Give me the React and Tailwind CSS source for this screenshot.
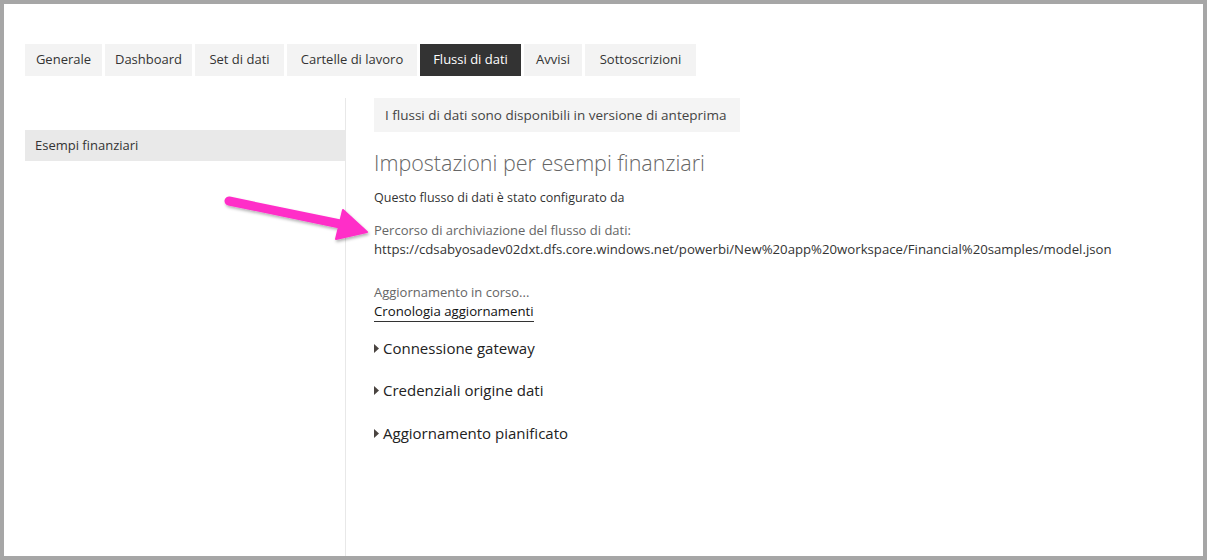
import React from "react";

const tabs = [
  { label: "Generale", w: "w-[77px]" },
  { label: "Dashboard", w: "w-[87px]" },
  { label: "Set di dati", w: "w-[89px]" },
  { label: "Cartelle di lavoro", w: "w-[130px]" },
  { label: "Flussi di dati", w: "w-[101px]", active: true },
  { label: "Avvisi", w: "w-[58px]" },
  { label: "Sottoscrizioni", w: "w-[111px]" },
];

function Tri() {
  return (
    <svg width="5" height="9" viewBox="0 0 5 9" className="mr-[4px] shrink-0">
      <path d="M0 0 L5 4.5 L0 9 Z" fill="#4a4440" />
    </svg>
  );
}

export default function App() {
  return (
    <div
      className="relative w-[1207px] h-[560px] bg-[#a6a6a6] pt-[4px] px-[4px] pb-[4px]"
      style={{ fontFamily: '"Open Sans", "Noto Sans", sans-serif' }}
    >
      <div className="w-full h-full bg-white flex flex-col">
        <div className="flex gap-[3px] pl-[21px] mt-[40px]">
          {tabs.map((t) => (
            <div
              key={t.label}
              className={`${t.w} h-[32px] flex items-center justify-center text-[13px] ${
                t.active ? "bg-[#333333] text-white" : "bg-[#f3f3f3] text-[#333]"
              }`}
            >
              {t.label}
            </div>
          ))}
        </div>
        <div className="flex flex-1 mt-[22px]">
          <div className="w-[321px] ml-[21px] pt-[32px] border-r border-[#e8e8e8]">
            <div className="h-[31px] bg-[#e9e9e9] flex items-center pl-[10px] text-[13px] text-[#333]">
              Esempi finanziari
            </div>
          </div>
          <div className="pl-[28px] flex flex-col">
            <div className="self-start w-[366px] h-[34px] bg-[#f4f4f4] flex items-center pl-[11px] text-[13.5px] text-[#444]">
              I flussi di dati sono disponibili in versione di anteprima
            </div>
            <div className="mt-[16px] text-[21.5px] leading-[30px] font-light text-[#666]">
              Impostazioni per esempi finanziari
            </div>
            <div className="mt-[11px] text-[12.5px] leading-[18px] text-[#333]">
              Questo flusso di dati è stato configurato da
            </div>
            <div className="mt-[14px] text-[13px] leading-[19px] text-[#666]">
              Percorso di archiviazione del flusso di dati:
            </div>
            <div className="text-[13.2px] leading-[19px] text-[#333]">
              https://cdsabyosadev02dxt.dfs.core.windows.net/powerbi/New%20app%20workspace/Financial%20samples/model.json
            </div>
            <div className="mt-[24px] text-[13px] leading-[19px] text-[#666]">
              Aggiornamento in corso...
            </div>
            <div className="self-start text-[13.2px] leading-[19px] text-[#111] border-b border-[#333]">
              Cronologia aggiornamenti
            </div>
            <div className="mt-[6px] flex items-center text-[15px] leading-[40px] text-[#222]">
              <Tri />Connessione gateway
            </div>
            <div className="mt-[2px] flex items-center text-[15px] leading-[40px] text-[#222]">
              <Tri />Credenziali origine dati
            </div>
            <div className="mt-[3px] flex items-center text-[15px] leading-[40px] text-[#222]">
              <Tri />Aggiornamento pianificato
            </div>
          </div>
        </div>
      </div>
      <svg
        className="absolute left-0 top-0 pointer-events-none"
        width="1207"
        height="560"
        viewBox="0 0 1207 560"
      >
        <defs>
          <filter id="sh" x="-20%" y="-20%" width="140%" height="140%">
            <feDropShadow dx="1" dy="2" stdDeviation="1.5" floodColor="#000" floodOpacity="0.3" />
          </filter>
        </defs>
        <g filter="url(#sh)">
          <line x1="229" y1="201" x2="345" y2="225" stroke="#ff2fc8" strokeWidth="9" strokeLinecap="round" />
          <path d="M343 210 L367 232 L336 239 Z" fill="#ff2fc8" stroke="#ff2fc8" strokeWidth="2" strokeLinejoin="round" />
        </g>
      </svg>
    </div>
  );
}
